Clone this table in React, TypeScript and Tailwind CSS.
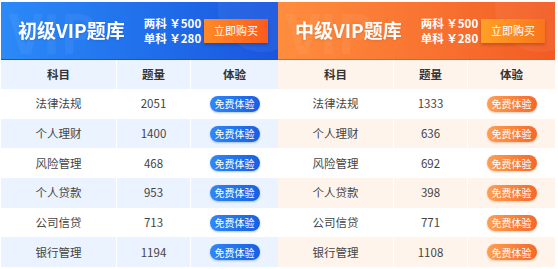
import React from "react";

type Row = { name: string; count: number };

const junior: Row[] = [
  { name: "法律法规", count: 2051 },
  { name: "个人理财", count: 1400 },
  { name: "风险管理", count: 468 },
  { name: "个人贷款", count: 953 },
  { name: "公司信贷", count: 713 },
  { name: "银行管理", count: 1194 },
];

const middle: Row[] = [
  { name: "法律法规", count: 1333 },
  { name: "个人理财", count: 636 },
  { name: "风险管理", count: 692 },
  { name: "个人贷款", count: 398 },
  { name: "公司信贷", count: 771 },
  { name: "银行管理", count: 1108 },
];

const themes = {
  blue: {
    header: "bg-gradient-to-r from-[#2c8af8] to-[#1b55de]",
    headLine: "border-[#1a52d4]",
    buy: "bg-gradient-to-r from-[#ff8a26] to-[#fb5a1e]",
    stripe: "bg-[#eaf3ff]",
    thead: "bg-[#eaf3ff]",
    trial: "bg-gradient-to-r from-[#2f87f7] to-[#1a5fe2]",
    trialShadow: "shadow-[0_1px_2px_rgba(26,95,226,0.35)]",
  },
  orange: {
    header: "bg-gradient-to-r from-[#ff8d3e] to-[#f25b24]",
    headLine: "border-[#ee5a22]",
    buy: "bg-gradient-to-r from-[#ffa126] to-[#f8741c]",
    stripe: "bg-[#fff4ec]",
    thead: "bg-[#fff4ec]",
    trial: "bg-gradient-to-r from-[#ff9e50] to-[#f4692a]",
    trialShadow: "shadow-[0_1px_2px_rgba(244,105,42,0.35)]",
  },
};

function Panel({ title, rows, theme }: { title: string; rows: Row[]; theme: keyof typeof themes }) {
  const t = themes[theme];
  return (
    <div className="w-[277px] shrink-0 flex flex-col">
      {/* header */}
      <div className={`relative h-[58px] overflow-hidden flex items-center ${t.header} border-b ${t.headLine}`}>
        <span className="absolute left-[8px] top-[2px] text-[54px] font-bold leading-none text-white/[0.05]">
          VIP
        </span>
        <div className="absolute -right-[30px] -top-[40px] w-[90px] h-[90px] rounded-full bg-white/[0.05]" />
        <div className="relative flex items-center w-full pl-[17px] pr-[10px] whitespace-nowrap">
          <span className="text-[19px] font-bold text-white drop-shadow-[0_1px_1px_rgba(0,0,0,0.1)]">
            {title}
          </span>
          <div className="ml-[19px] flex flex-col text-white text-[11.5px] font-bold leading-[15px]">
            <span>两科 ￥500</span>
            <span>单科 ￥280</span>
          </div>
          <div
            className={`ml-auto w-[64px] h-[24px] flex items-center justify-center text-white text-[11px] ${t.buy} shadow-[0_2px_3px_rgba(0,0,0,0.2)]`}
          >
            立即购买
          </div>
        </div>
      </div>
      {/* table head */}
      <div className={`grid grid-cols-[116px_74px_1fr] h-[29px] text-[11.5px] font-bold text-[#333] ${t.thead}`}>
        <div className="flex items-center justify-center border-r border-white">科目</div>
        <div className="flex items-center justify-center border-r border-white">题量</div>
        <div className="flex items-center justify-center">体验</div>
      </div>
      {rows.map((r, i) => (
        <div
          key={r.name}
          className={`grid grid-cols-[116px_74px_1fr] h-[29.7px] text-[11.5px] text-[#444] ${i % 2 === 1 ? t.stripe : "bg-white"}`}
        >
          <div className="flex items-center justify-center border-r border-white">{r.name}</div>
          <div className="flex items-center justify-center border-r border-white">{r.count}</div>
          <div className="flex items-center justify-center">
            <span
              className={`w-[50px] h-[16px] rounded-full flex items-center justify-center whitespace-nowrap text-white text-[10px] ${t.trial} ${t.trialShadow}`}
            >
              免费体验
            </span>
          </div>
        </div>
      ))}
    </div>
  );
}

export default function App() {
  return (
    <div
      className="w-[558px] h-[269px] bg-white pt-[2px] pl-[1px] flex"
      style={{ fontFamily: '"Microsoft YaHei", "Noto Sans CJK SC", "Noto Sans", sans-serif' }}
    >
      <Panel title="初级VIP题库" rows={junior} theme="blue" />
      <Panel title="中级VIP题库" rows={middle} theme="orange" />
    </div>
  );
}
